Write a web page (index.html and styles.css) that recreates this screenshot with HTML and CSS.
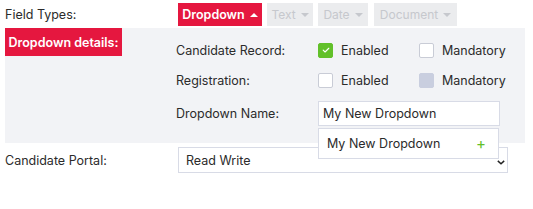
FILE: index.html
```html
<!DOCTYPE html>
<html>
<head>
<meta charset="utf-8">
<link rel="stylesheet" href="styles.css">
</head>
<body>
<div class="types">
  <div class="types-label">Field Types:</div>
  <div class="types-btns">
    <span class="tbtn active b-dd">Dropdown <span class="caret up"></span></span>
    <span class="tbtn b-text">Text <span class="caret"></span></span>
    <span class="tbtn b-date">Date <span class="caret"></span></span>
    <span class="tbtn b-doc">Document <span class="caret"></span></span>
  </div>
</div>
<div class="panel">
  <div class="badge">Dropdown details:</div>
  <div class="grid">
    <div class="lbl">Candidate Record:</div>
    <div class="opts">
      <label class="opt w-en"><span class="cb checked"><svg viewBox="0 0 16 16" width="10" height="10"><path d="M3.5 8.3l3 2.9 6-6" fill="none" stroke="#fff" stroke-width="1.8" stroke-linecap="round" stroke-linejoin="round"/></svg></span>Enabled</label>
      <label class="opt"><span class="cb"></span>Mandatory</label>
    </div>
    <div class="lbl">Registration:</div>
    <div class="opts">
      <label class="opt w-en"><span class="cb"></span>Enabled</label>
      <label class="opt"><span class="cb disabled"></span>Mandatory</label>
    </div>
    <div class="lbl">Dropdown Name:</div>
    <div class="name-wrap">
      <div class="input">My New Dropdown</div>
      <div class="menu"><span>My New Dropdown</span><span class="plus">+</span></div>
    </div>
  </div>
</div>
<div class="portal">
  <div class="portal-label">Candidate Portal:</div>
  <div class="select">Read Write<svg class="chev" viewBox="0 0 10 6" width="8" height="5"><path d="M1 1l4 3.5L9 1" fill="none" stroke="#222" stroke-width="1.8"/></svg></div>
</div>
</body>
</html>
```
FILE: styles.css
```css
* { box-sizing: border-box; }
body {
  margin: 0;
  padding: 3px 5px 0 5px;
  font-family: "Inter", "DejaVu Sans", sans-serif;
  font-size: 12.5px;
  color: #2b2b2b;
  background: #fff;
}
.types {
  display: flex;
  align-items: center;
  height: 23px;
}
.types-label { width: 173px; }
.types-btns { display: flex; }
.tbtn {
  display: flex;
  align-items: center;
  justify-content: center;
  height: 23px;
  background: #ebecee;
  color: #c6c8cd;
  gap: 5px;
  font-size: 12px;
  white-space: nowrap;
}
.b-dd { width: 84px; margin-right: 5px; }
.b-text { width: 46px; margin-right: 5px; }
.b-date { width: 50px; margin-right: 6px; }
.b-doc { width: 83px; }
.tbtn.active {
  background: #e5173f;
  color: #fff;
  font-weight: 600;
  font-size: 12.5px;
}
.caret {
  width: 0; height: 0;
  border-left: 4px solid transparent;
  border-right: 4px solid transparent;
  border-top: 4px solid currentColor;
}
.caret.up {
  border-top: none;
  border-bottom: 4px solid currentColor;
}
.panel {
  margin-top: 2px;
  width: 520px;
  height: 115px;
  background: #f2f3f6;
  display: flex;
  align-items: flex-start;
}
.badge {
  flex: none;
  width: 117px;
  height: 28px;
  background: #e5173f;
  color: #fff;
  font-weight: 600;
  font-size: 12.5px;
  white-space: nowrap;
  display: flex;
  align-items: center;
  justify-content: center;
}
.grid {
  margin-left: 54px;
  padding-top: 7px;
  display: grid;
  grid-template-columns: 142px auto;
  grid-template-rows: 30px 30px 36px;
  align-items: center;
}
.opts { display: flex; align-items: center; }
.opt { display: flex; align-items: center; gap: 8px; }
.w-en { width: 101px; }
.cb {
  width: 15px; height: 15px;
  border: 1px solid #c9ccd6;
  border-radius: 2px;
  background: #fff;
  display: flex; align-items: center; justify-content: center;
}
.cb.checked { background: #62c02a; border-color: #62c02a; }
.cb.disabled { background: #c9cedf; border-color: #c9cedf; }
.name-wrap { position: relative; }
.input {
  width: 182px;
  height: 25px;
  background: #fff;
  border: 1px solid #d8dbe6;
  display: flex; align-items: center;
  padding-left: 4px;
}
.menu {
  position: absolute;
  left: 0; top: 27px;
  width: 181px; height: 31px;
  background: #fff;
  border: 1px solid #d8dbe6;
  display: flex; align-items: center; justify-content: space-between;
  padding: 0 12px 0 8px;
  z-index: 2;
}
.plus { color: #62c02a; font-size: 15px; }
.portal {
  display: flex;
  align-items: center;
  margin-top: 4px;
}
.portal-label { width: 173px; }
.select {
  width: 330px;
  height: 26px;
  border: 1px solid #d8dbe6;
  display: flex; align-items: center; justify-content: space-between;
  padding: 0 2px 0 7px;
}
.chev { margin-top: 4px; }
```
